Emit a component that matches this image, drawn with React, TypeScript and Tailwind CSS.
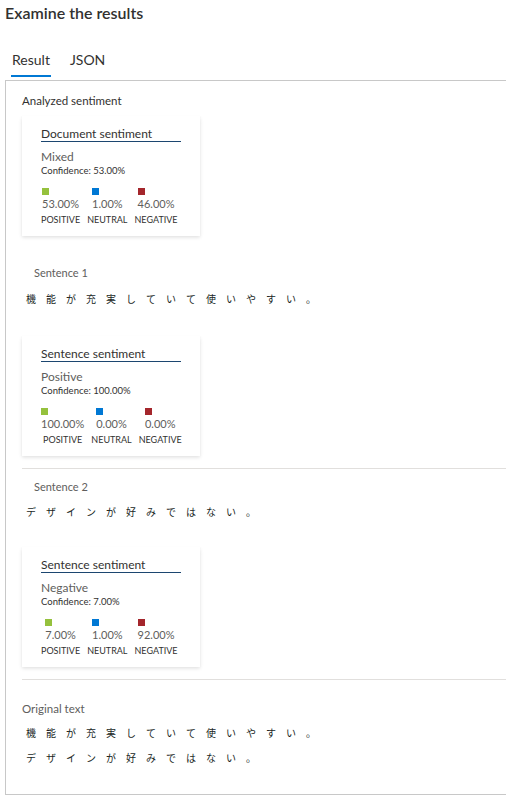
import React from "react";

type Scores = { positive: string; neutral: string; negative: string };

const FONT = "font-['Lato','Open_Sans',sans-serif]";
const JP = "font-['Noto_Sans_CJK_JP','Noto_Sans',sans-serif]";

function SpacedText({ text }: { text: string }) {
  return (
    <div className={`${JP} flex text-[10px] leading-[14px] text-[#201f1e]`}>
      {Array.from(text).map((ch, i) => (
        <span key={i} className="inline-block w-[10px] mr-[10px] text-center">
          {ch}
        </span>
      ))}
    </div>
  );
}

function ScoreColumn({ color, value, label }: { color: string; value: string; label: string }) {
  return (
    <div className="flex flex-col items-center">
      <div className="flex flex-col items-start">
        <span className={`block w-[7px] h-[7px] ${color}`} />
        <span className="mt-[2px] text-[11px] leading-[14px] text-[#605e5c]">{value}</span>
      </div>
      <span className="mt-[3px] text-[9px] leading-[12px] text-[#323130]">{label}</span>
    </div>
  );
}

function SentimentCard({
  title,
  label,
  confidence,
  scores,
}: {
  title: string;
  label: string;
  confidence: string;
  scores: Scores;
}) {
  return (
    <div className="w-[178px] bg-white pt-[10px] pb-[10px] pl-[19px] shadow-[0_1.6px_3.6px_rgba(0,0,0,0.13),0_0.3px_0.9px_rgba(0,0,0,0.11)]">
      <div className="w-[140px] border-b border-[#1c4670] text-[12px] leading-[15px] text-[#323130]">{title}</div>
      <div className="mt-[7px] text-[12px] leading-[15px] text-[#605e5c]">{label}</div>
      <div className="text-[9.5px] leading-[13px] text-[#323130]">Confidence: {confidence}</div>
      <div className="mt-[11px] flex gap-[7px]">
        <ScoreColumn color="bg-[#95c13d]" value={scores.positive} label="POSITIVE" />
        <ScoreColumn color="bg-[#0078d4]" value={scores.neutral} label="NEUTRAL" />
        <ScoreColumn color="bg-[#a4262c]" value={scores.negative} label="NEGATIVE" />
      </div>
    </div>
  );
}

const S1 = "機能が充実していて使いやすい。";
const S2 = "デザインが好みではない。";

export default function App() {
  return (
    <div className={`${FONT} w-[506px] h-[801px] overflow-hidden bg-white`}>
      <div className="pl-[5px]">
        <h1 className="text-[16px] leading-[26px] font-semibold text-[#323130]">Examine the results</h1>

        {/* Tabs */}
        <div className="mt-[24px] flex items-start pl-[6px] gap-[19px] text-[14px] leading-[20px] text-[#323130]">
          <div className="flex flex-col">
            <span className="px-[1px]">Result</span>
            <span className="mt-[5px] h-[2px] bg-[#0078d4]" />
          </div>
          <span>JSON</span>
        </div>

        {/* Result panel */}
        <div className="mt-[3px] w-[560px] border border-[#c8c8c8] pl-[16px] pt-[12px] pb-[29px]">
          <div className="text-[11.5px] leading-[16px] text-[#323130]">Analyzed sentiment</div>
          <div className="mt-[7px]">
            <SentimentCard
              title="Document sentiment"
              label="Mixed"
              confidence="53.00%"
              scores={{ positive: "53.00%", neutral: "1.00%", negative: "46.00%" }}
            />
          </div>

          <div className="border-b border-[#e1dfdd] pb-[12px]">
            <div className="mt-[30px] pl-[12px] text-[11px] leading-[14px] text-[#605e5c]">Sentence 1</div>
            <div className="mt-[12px] pl-[4px]">
              <SpacedText text={S1} />
            </div>
            <div className="mt-[30px]">
              <SentimentCard
                title="Sentence sentiment"
                label="Positive"
                confidence="100.00%"
                scores={{ positive: "100.00%", neutral: "0.00%", negative: "0.00%" }}
              />
            </div>
          </div>

          <div className="border-b border-[#e1dfdd] pb-[12px]">
            <div className="mt-[11px] pl-[12px] text-[11px] leading-[14px] text-[#605e5c]">Sentence 2</div>
            <div className="mt-[11px] pl-[4px]">
              <SpacedText text={S2} />
            </div>
            <div className="mt-[28px]">
              <SentimentCard
                title="Sentence sentiment"
                label="Negative"
                confidence="7.00%"
                scores={{ positive: "7.00%", neutral: "1.00%", negative: "92.00%" }}
              />
            </div>
          </div>

          <div className="mt-[21px] text-[11.5px] leading-[16px] text-[#605e5c]">Original text</div>
          <div className="mt-[9px] pl-[4px] flex flex-col gap-[11px]">
            <SpacedText text={S1} />
            <SpacedText text={S2} />
          </div>
        </div>
      </div>
    </div>
  );
}
